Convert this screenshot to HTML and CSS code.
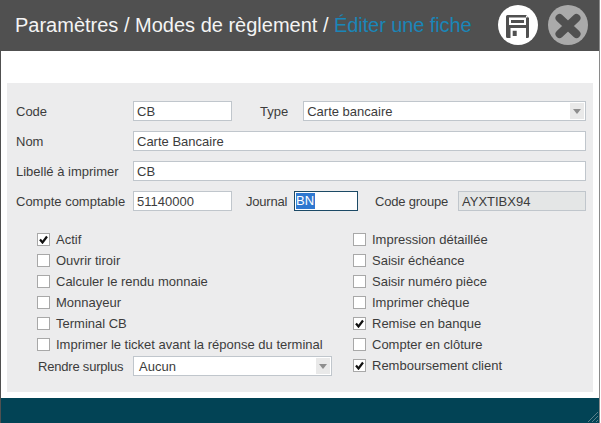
FILE: index.html
```html
<!DOCTYPE html>
<html lang="fr">
<head>
<meta charset="utf-8">
<title>Modes de règlement</title>
<link rel="stylesheet" href="styles.css">
</head>
<body>
<div class="window">
  <header class="header">
    <h1 class="title">Paramètres / Modes de règlement / <span class="title-current">Éditer une fiche</span></h1>
    <div class="actions">
      <svg class="action" viewBox="0 0 40 40" width="40" height="40">
        <circle cx="20" cy="20" r="20" fill="#fff"/>
        <path fill="#505050" fill-rule="evenodd" d="M8 11.500Q8 10 9.500 10H28L31 13V31.500Q31 33 29.500 33H9.500Q8 33 8 31.500ZM11 12.500V20H28V12.500ZM13 15H26V18H13ZM12.500 23V33H28V23ZM14.700 25.700H18.700V31H14.700Z"/>
        <rect x="28" y="11" width="1.500" height="1.500" fill="#fff"/>
      </svg>
      <svg class="action" viewBox="0 0 40 40" width="40" height="40">
        <circle cx="20" cy="20" r="20" fill="#aaaaaa"/>
        <path stroke="#505050" stroke-width="8" stroke-linecap="round" d="M11.500 13L28.500 29M28.500 13L11.500 29"/>
      </svg>
    </div>
  </header>
  <main class="body">
    <section class="panel">
      <div class="row">
        <span class="label">Code</span>
        <span class="field w-code">CB</span>
        <span class="label label-type">Type</span>
        <span class="field select grow">Carte bancaire<span class="arrow"></span></span>
      </div>
      <div class="row">
        <span class="label">Nom</span>
        <span class="field grow">Carte Bancaire</span>
      </div>
      <div class="row">
        <span class="label">Libellé à imprimer</span>
        <span class="field grow">CB</span>
      </div>
      <div class="row">
        <span class="label">Compte comptable</span>
        <span class="field w-code">51140000</span>
        <span class="label label-journal">Journal</span>
        <span class="field focus"><span class="selected">BN</span></span>
        <span class="label label-group">Code groupe</span>
        <span class="field disabled grow">AYXTIBX94</span>
      </div>
      <div class="checks">
        <div class="col col-left">
          <div class="check"><span class="box on"><svg viewBox="0 0 9 9" width="9" height="9"><path d="M1 4.500L3.500 7.500L8 1.500" fill="none" stroke="#111" stroke-width="2.200"/></svg></span>Actif</div>
          <div class="check"><span class="box"></span>Ouvrir tiroir</div>
          <div class="check"><span class="box"></span>Calculer le rendu monnaie</div>
          <div class="check"><span class="box"></span>Monnayeur</div>
          <div class="check"><span class="box"></span>Terminal CB</div>
          <div class="check"><span class="box"></span>Imprimer le ticket avant la réponse du terminal</div>
          <div class="surplus">
            <span class="surplus-label">Rendre surplus</span>
            <span class="field select w-surplus">Aucun<span class="arrow"></span></span>
          </div>
        </div>
        <div class="col">
          <div class="check"><span class="box"></span>Impression détaillée</div>
          <div class="check"><span class="box"></span>Saisir échéance</div>
          <div class="check"><span class="box"></span>Saisir numéro pièce</div>
          <div class="check"><span class="box"></span>Imprimer chèque</div>
          <div class="check"><span class="box on"><svg viewBox="0 0 9 9" width="9" height="9"><path d="M1 4.500L3.500 7.500L8 1.500" fill="none" stroke="#111" stroke-width="2.200"/></svg></span>Remise en banque</div>
          <div class="check"><span class="box"></span>Compter en clôture</div>
          <div class="check"><span class="box on"><svg viewBox="0 0 9 9" width="9" height="9"><path d="M1 4.500L3.500 7.500L8 1.500" fill="none" stroke="#111" stroke-width="2.200"/></svg></span>Remboursement client</div>
        </div>
      </div>
    </section>
  </main>
  <footer class="footer">
    <svg class="grip" viewBox="0 0 12 12" width="12" height="12"><path d="M11 1L1 11M11 5L5 11M11 9L9 11" stroke="#5c7f8a" stroke-width="1" fill="none"/></svg>
  </footer>
</div>
</body>
</html>
```
FILE: styles.css
```css
* { box-sizing: border-box; }
html, body { margin: 0; padding: 0; }
body {
  width: 601px;
  height: 423px;
  overflow: hidden;
  background: #fff;
  font-family: "Liberation Sans", Arial, sans-serif;
  font-size: 13px;
  color: #3c3c3c;
}
.window {
  width: 600px;
  height: 423px;
  display: flex;
  flex-direction: column;
  border-left: 1px solid #505050;
  border-right: 1px solid #8a8a8a;
}
.header {
  height: 51px;
  flex: none;
  background: #505050;
  display: flex;
  align-items: center;
  justify-content: space-between;
  padding: 0 11px 1px 14px;
}
.title {
  margin: 0;
  font-size: 20px;
  font-weight: normal;
  color: #f4f4f4;
}
.title-current { color: #1a86b8; letter-spacing: -0.1px; }
.actions { display: flex; gap: 10px; }
.action { display: block; }
.body {
  height: 347px;
  flex: none;
  padding: 32px 6px 6px;
  background: #fff;
}
.panel {
  height: 309px;
  background: #ececed;
  padding: 18px 7px 0 9px;
  display: flex;
  flex-direction: column;
  gap: 10px;
}
.row { display: flex; align-items: center; height: 20px; }
.label { width: 117px; flex: none; }
.label-type { width: auto; margin: 0 15px 0 28px; }
.label-journal { width: 42px; margin: 0 6px 0 14px; letter-spacing: -0.2px; }
.label-group { width: 73px; margin: 0 10px 0 17px; letter-spacing: -0.2px; }
.field {
  height: 20px;
  line-height: 19px;
  border: 1px solid #c0c6cc;
  background: #fff;
  padding: 0 3px;
  display: block;
  white-space: nowrap;
  position: relative;
}
.grow { flex: 1; }
.w-code { width: 99px; }
.w-surplus { width: 199px; padding-left: 5px; }
.focus { width: 64px; border-color: #1c4a66; padding-left: 1px; }
.selected { background: #2f78d0; color: #fff; display: inline-block; height: 16px; line-height: 16px; padding-right: 1px; vertical-align: top; margin-top: 1px; }
.disabled { background: #e4e6e6; }
.arrow {
  position: absolute;
  top: 1px;
  right: 1px;
  width: 14px;
  height: 16px;
  background: #e9e9e9;
}
.arrow::after {
  content: "";
  position: absolute;
  left: 3px;
  top: 6px;
  border: 4px solid transparent;
  border-top: 5px solid #8e8e8e;
  border-bottom: 0;
}
.checks {
  display: flex;
  margin-top: 8px;
  padding-left: 21px;
}
.col { display: flex; flex-direction: column; }
.col-left { width: 316px; }
.check {
  height: 21px;
  display: flex;
  align-items: center;
  gap: 6px;
  white-space: nowrap;
}
.box {
  width: 13px;
  height: 13px;
  flex: none;
  border: 1px solid #a8a8a8;
  background: #fff;
  display: flex;
  align-items: center;
  justify-content: center;
}
.surplus { display: flex; align-items: center; margin-left: 1px; height: 20px; margin-top: 1px; }
.surplus-label { width: 95px; flex: none; letter-spacing: -0.2px; }
.footer {
  flex: 1;
  background: #024355;
  position: relative;
}
.grip { position: absolute; right: 0; bottom: 0; display: block; }
```
